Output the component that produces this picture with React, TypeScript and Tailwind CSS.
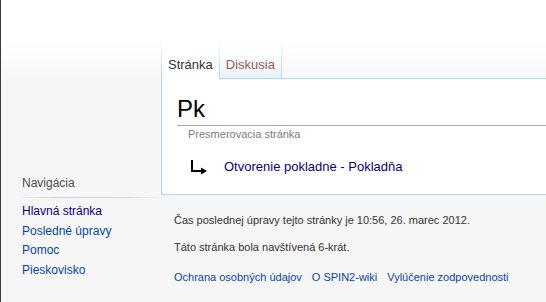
import React from "react";

const navLinks = [
  { label: "Hlavná stránka", visited: true },
  { label: "Posledné úpravy", visited: false },
  { label: "Pomoc", visited: false },
  { label: "Pieskovisko", visited: false },
];

const footerLinks = [
  "Ochrana osobných údajov",
  "O SPIN2-wiki",
  "Vylúčenie zodpovednosti",
];

const TabSeparator = () => (
  <div className="w-px bg-[linear-gradient(to_bottom,rgba(167,215,249,0)_0%,#a7d7f9_100%)]" />
);

const RedirectArrow = () => (
  <svg width="18" height="16" viewBox="0 0 18 16" className="shrink-0">
    <path d="M2 1 V12 H12" fill="none" stroke="#000" strokeWidth="2" />
    <path d="M11 8.5 L17 12 L11 15.5 Z" fill="#000" />
  </svg>
);

export default function App() {
  return (
    <div className="w-[546px] h-[302px] flex overflow-hidden font-['Liberation_Sans',Arial,sans-serif] bg-[linear-gradient(#fff_40px,#f6f6f6_80px)]">
      <div className="w-px shrink-0 bg-[#3a3a3a]" />

      {/* sidebar */}
      <aside className="w-[160px] shrink-0 pt-[176px]">
        <h3 className="pl-[21px] text-[12px] leading-[14px] text-[#4d4d4d]">
          Navigácia
        </h3>
        <div className="mt-[7px] ml-[17px] h-px bg-[linear-gradient(to_right,rgba(200,204,209,0)_0%,#c8ccd1_30%,#d6d8db_75%,rgba(200,204,209,0)_100%)]" />
        <ul className="mt-[4px] pl-[21px]">
          {navLinks.map((l) => (
            <li
              key={l.label}
              className={`py-[3px] text-[12px] leading-[13.5px] ${
                l.visited ? "text-[#0b0080]" : "text-[#0645ad]"
              }`}
            >
              {l.label}
            </li>
          ))}
        </ul>
      </aside>

      {/* content */}
      <main className="flex-1 pt-[40px]">
        <div className="flex h-[39px] text-[13px] leading-[16px]">
          <TabSeparator />
          <div className="bg-white pt-[17px] px-[6px] text-[#333]">Stránka</div>
          <TabSeparator />
          <div className="pt-[17px] pl-[6px] pr-[6px] text-[#a55858] border-b border-[#a7d7f9] bg-[linear-gradient(to_bottom,#fff_0%,#fbfdff_45%,#e8f2f8_100%)]">
            Diskusia
          </div>
          <TabSeparator />
          <div className="flex-1 border-b border-[#a7d7f9]" />
        </div>

        <div className="bg-white border-l border-b border-[#a7d7f9] pt-[15px] pl-[15px] pb-[19px]">
          <h1 className="text-[24px] leading-[29px] text-black pb-[2px] border-b border-[#aaa]">
            Pk
          </h1>
          <div className="mt-[2px] ml-[11px] text-[11px] leading-[13px] text-[#7d7d7d]">
            Presmerovacia stránka
          </div>
          <div className="mt-[18px] ml-[13px] flex items-center gap-[16px] h-[16px]">
            <RedirectArrow />
            <span className="text-[13px] leading-[16px] text-[#0b0080]">
              Otvorenie pokladne - Pokladňa
            </span>
          </div>
        </div>

        <footer className="pt-[19px] pl-[13px] text-[11px] leading-[13px] text-[#333]">
          <p>Čas poslednej úpravy tejto stránky je 10:56, 26. marec 2012.</p>
          <p className="mt-[14px]">Táto stránka bola navštívená 6-krát.</p>
          <div className="mt-[17px] flex gap-[10px] text-[#0645ad]">
            {footerLinks.map((f) => (
              <span key={f}>{f}</span>
            ))}
          </div>
        </footer>
      </main>
    </div>
  );
}
